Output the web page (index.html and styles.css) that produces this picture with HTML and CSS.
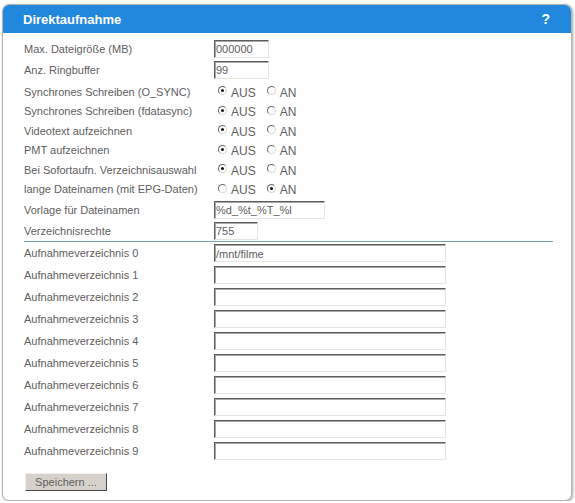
FILE: index.html
```html
<!DOCTYPE html>
<html lang="de">
<head>
    <meta charset="UTF-8">
    <title>Direktaufnahme</title>
    <link rel="stylesheet" href="styles.css">
</head>
<body>

<div class="panel">
    <div class="panel-head">
        <span class="title">Direktaufnahme</span>
        <span class="help">?</span>
    </div>
    <form class="panel-body">
        <div class="row">
            <label class="lbl">Max. Dateigröße (MB)</label>
            <input class="field w-small" type="text" value="000000">
        </div>
        <div class="row">
            <label class="lbl">Anz. Ringbuffer</label>
            <input class="field w-small" type="text" value="99">
        </div>

        <div class="radios">
            <div class="row radio-row">
                <label class="lbl">Synchrones Schreiben (O_SYNC)</label>
                <div class="choice">
                    <label><input type="radio" name="osync" checked> AUS</label>
                    <label><input type="radio" name="osync"> AN</label>
                </div>
            </div>
            <div class="row radio-row">
                <label class="lbl">Synchrones Schreiben (fdatasync)</label>
                <div class="choice">
                    <label><input type="radio" name="fdsync" checked> AUS</label>
                    <label><input type="radio" name="fdsync"> AN</label>
                </div>
            </div>
            <div class="row radio-row">
                <label class="lbl">Videotext aufzeichnen</label>
                <div class="choice">
                    <label><input type="radio" name="vtxt" checked> AUS</label>
                    <label><input type="radio" name="vtxt"> AN</label>
                </div>
            </div>
            <div class="row radio-row">
                <label class="lbl">PMT aufzeichnen</label>
                <div class="choice">
                    <label><input type="radio" name="pmt" checked> AUS</label>
                    <label><input type="radio" name="pmt"> AN</label>
                </div>
            </div>
            <div class="row radio-row">
                <label class="lbl">Bei Sofortaufn. Verzeichnisauswahl</label>
                <div class="choice">
                    <label><input type="radio" name="sofort" checked> AUS</label>
                    <label><input type="radio" name="sofort"> AN</label>
                </div>
            </div>
            <div class="row radio-row">
                <label class="lbl">lange Dateinamen (mit EPG-Daten)</label>
                <div class="choice">
                    <label><input type="radio" name="epg"> AUS</label>
                    <label><input type="radio" name="epg" checked> AN</label>
                </div>
            </div>
        </div>

        <div class="row">
            <label class="lbl">Vorlage für Dateinamen</label>
            <input class="field w-mid" type="text" value="%d_%t_%T_%l">
        </div>
        <div class="row">
            <label class="lbl">Verzeichnisrechte</label>
            <input class="field w-tiny" type="text" value="755">
        </div>

        <hr class="sep">

        <div class="row dir-row">
            <label class="lbl">Aufnahmeverzeichnis 0</label>
            <input class="field w-wide" type="text" value="/mnt/filme">
        </div>
        <div class="row dir-row">
            <label class="lbl">Aufnahmeverzeichnis 1</label>
            <input class="field w-wide" type="text">
        </div>
        <div class="row dir-row">
            <label class="lbl">Aufnahmeverzeichnis 2</label>
            <input class="field w-wide" type="text">
        </div>
        <div class="row dir-row">
            <label class="lbl">Aufnahmeverzeichnis 3</label>
            <input class="field w-wide" type="text">
        </div>
        <div class="row dir-row">
            <label class="lbl">Aufnahmeverzeichnis 4</label>
            <input class="field w-wide" type="text">
        </div>
        <div class="row dir-row">
            <label class="lbl">Aufnahmeverzeichnis 5</label>
            <input class="field w-wide" type="text">
        </div>
        <div class="row dir-row">
            <label class="lbl">Aufnahmeverzeichnis 6</label>
            <input class="field w-wide" type="text">
        </div>
        <div class="row dir-row">
            <label class="lbl">Aufnahmeverzeichnis 7</label>
            <input class="field w-wide" type="text">
        </div>
        <div class="row dir-row">
            <label class="lbl">Aufnahmeverzeichnis 8</label>
            <input class="field w-wide" type="text">
        </div>
        <div class="row dir-row">
            <label class="lbl">Aufnahmeverzeichnis 9</label>
            <input class="field w-wide" type="text">
        </div>

        <div class="actions">
            <button type="button" class="btn">Speichern ...</button>
        </div>
    </form>
</div>

</body>
</html>
```

FILE: styles.css
```css
body {
    margin: 0;
    background-color: #ffffff;
    font-family: "Liberation Sans", Arial, sans-serif;
    color: #5e5e5e;
}
.panel {
    width: 570px;
    margin: 4px 0 0 2px;
    box-sizing: border-box;
    border: 1px solid #b4b4b4;
    border-radius: 7px;
    background-color: #ffffff;
    box-shadow: 1px 1px 3px rgba(0, 0, 0, 0.35);
    overflow: hidden;
}
.panel-head {
    display: flex;
    justify-content: space-between;
    align-items: center;
    height: 28px;
    padding: 0 21px 0 20px;
    background-color: #2188dd;
    color: #ffffff;
    font-weight: bold;
}
.title {
    font-size: 13px;
}
.help {
    font-size: 14px;
}
.panel-body {
    margin: 0;
    padding: 5px 18px 9px 21px;
}
.row {
    display: grid;
    grid-template-columns: 190px 1fr;
    align-items: center;
    height: 21px;
}
.lbl {
    font-size: 11px;
}
.radios {
    margin-top: 2px;
}
.radio-row {
    height: 19.5px;
}
.dir-row {
    height: 22px;
}
.field {
    box-sizing: border-box;
    height: 18px;
    padding: 1px 1px 0 1px;
    border: 1px solid;
    border-color: #5c5c5c #e6e6de #e6e6de #5c5c5c;
    box-shadow: inset 1px 1px 0 #a8a8a8;
    background-color: #ffffff;
    font-family: "Liberation Sans", Arial, sans-serif;
    font-size: 11px;
    color: #5e5e5e;
    outline: none;
}
.w-tiny {
    width: 44px;
}
.w-small {
    width: 55px;
}
.w-mid {
    width: 111px;
}
.w-wide {
    width: 232px;
}
.choice {
    display: flex;
    padding-left: 4px;
    font-size: 12px;
}
.choice label {
    display: flex;
    align-items: center;
    margin-right: 11px;
    padding-top: 2px;
}
.choice input {
    appearance: none;
    -webkit-appearance: none;
    box-sizing: border-box;
    width: 9px;
    height: 9px;
    margin: -4px 4px 0 0;
    border: 1px solid;
    border-color: #6a6a6a #d8d8d8 #d8d8d8 #6a6a6a;
    border-radius: 50%;
    background-color: #ffffff;
    position: relative;
}
.choice input:checked::after {
    content: "";
    position: absolute;
    left: 2px;
    top: 2px;
    width: 3px;
    height: 3px;
    border-radius: 50%;
    background-color: #111111;
}
.sep {
    height: 0;
    margin: 0;
    border: none;
    border-top: 1px solid #7a9fb5;
}
.actions {
    margin-top: 10px;
}
.btn {
    width: 82px;
    height: 18px;
    padding: 0;
    margin-left: 1px;
    border: 1px solid;
    border-color: #f4f2ee #4a4a4a #4a4a4a #f4f2ee;
    background-color: #d6d2cb;
    font-family: "Liberation Sans", Arial, sans-serif;
    font-size: 11px;
    color: #5e5e5e;
}
```
